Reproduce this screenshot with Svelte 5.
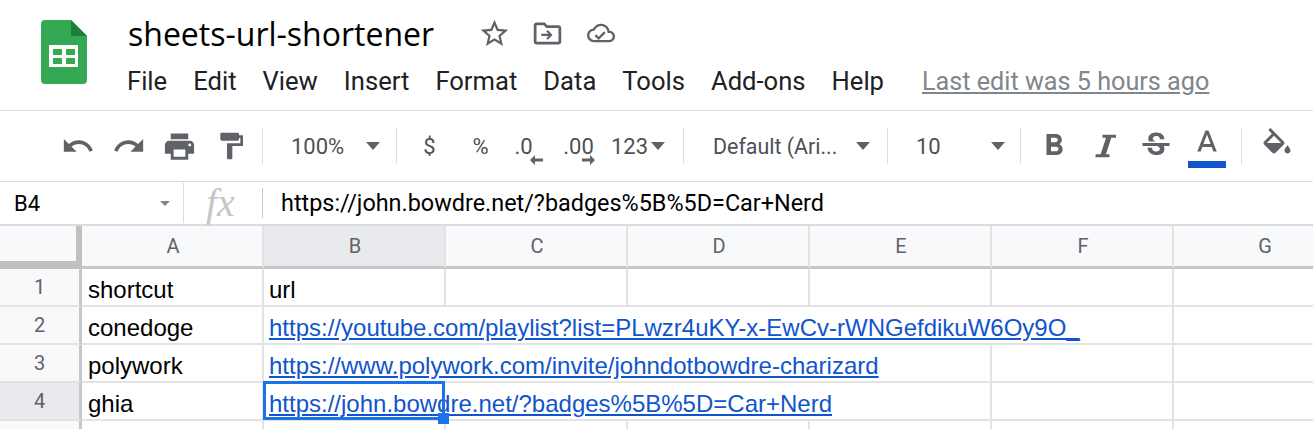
<script>
  const menus = ["File", "Edit", "View", "Insert", "Format", "Data", "Tools", "Add-ons", "Help"];
  const columns = ["A", "B", "C", "D", "E", "F", "G"];
  const rows = [
    { n: 1, a: "shortcut", b: "url", span: 1, link: false },
    { n: 2, a: "conedoge", b: "https://youtube.com/playlist?list=PLwzr4uKY-x-EwCv-rWNGefdikuW6Oy9O_", span: 5, link: true },
    { n: 3, a: "polywork", b: "https://www.polywork.com/invite/johndotbowdre-charizard", span: 4, link: true },
    { n: 4, a: "ghia", b: "https://john.bowdre.net/?badges%5B%5D=Car+Nerd", span: 4, link: true, selected: true },
    { n: "", a: "", b: "", span: 1, link: false }
  ];
</script>

<div class="page">
  <header class="titlebar">
    <svg class="logo" viewBox="0 0 48 66">
      <path fill="#34a853" d="M5 1h26l16 16v44a4 4 0 0 1-4 4H5a4 4 0 0 1-4-4V5a4 4 0 0 1 4-4z" />
      <path fill="#188038" d="M31 1l16 16H31z" />
      <path fill="#fff" d="M9 26h29v22H9z" />
      <path fill="#34a853" d="M13 30h9v6h-9zM26 30h9v6h-9zM13 39h9v6h-9zM26 39h9v6h-9z" />
    </svg>
    <div class="titlecol">
      <div class="titlerow">
        <span class="docname">sheets-url-shortener</span>
        <svg class="ticon" viewBox="0 0 24 24"><path d="M22 9.24l-7.19-.62L12 2 9.19 8.63 2 9.24l5.46 4.73L5.82 21 12 17.27 18.18 21l-1.63-7.03L22 9.24zM12 15.4l-3.76 2.27 1-4.28-3.32-2.88 4.38-.38L12 6.1l1.71 4.04 4.38.38-3.32 2.88 1 4.28L12 15.4z" /></svg>
        <svg class="ticon" viewBox="0 0 24 24"><path d="M20 6h-8l-2-2H4c-1.1 0-2 .9-2 2v12c0 1.1.9 2 2 2h16c1.1 0 2-.9 2-2V8c0-1.1-.9-2-2-2zm0 12H4V6h5.17l2 2H20v10z" /><path d="M12.2 9.5l-1.1 1.1 1.6 1.6H7.5v1.6h5.2l-1.6 1.6 1.1 1.1 3.5-3.5z" /></svg>
        <svg class="ticon cloud" viewBox="0 0 24 24"><path d="M19.35 10.04C18.67 6.59 15.64 4 12 4 9.11 4 6.6 5.64 5.35 8.04 2.34 8.36 0 10.91 0 14c0 3.31 2.69 6 6 6h13c2.76 0 5-2.24 5-5 0-2.64-2.05-4.78-4.65-4.96zM19 18H6c-2.21 0-4-1.79-4-4 0-2.05 1.53-3.76 3.56-3.97l1.07-.11.5-.95C8.08 7.14 9.94 6 12 6c2.62 0 4.88 1.86 5.39 4.43l.3 1.5 1.53.11c1.56.1 2.78 1.41 2.78 2.96 0 1.65-1.35 3-3 3zm-9-2.82l-2.09-2.09L6.5 14.5 10 18l6.01-6.01-1.41-1.41z" /></svg>
      </div>
      <nav class="menubar">
        {#each menus as m}
          <span>{m}</span>
        {/each}
        <span class="lastedit">Last edit was 5 hours ago</span>
      </nav>
    </div>
  </header>

  <div class="toolbar">
    <div class="group lead">
      <span class="btn hist"><svg viewBox="0 0 24 24"><path d="M12.5 8c-2.65 0-5.05.99-6.9 2.6L2 7v9h9l-3.62-3.62c1.39-1.16 3.16-1.88 5.12-1.88 3.54 0 6.55 2.31 7.6 5.5l2.37-.78C21.08 11.03 17.15 8 12.5 8z" /></svg></span>
      <span class="btn hist"><svg viewBox="0 0 24 24"><path d="M18.4 10.6C16.55 8.99 14.15 8 11.5 8c-4.65 0-8.58 3.03-9.96 7.22L3.9 16c1.05-3.19 4.05-5.5 7.6-5.5 1.95 0 3.73.72 5.12 1.88L13 16h9V7l-3.6 3.6z" /></svg></span>
      <span class="btn print"><svg viewBox="0 0 24 24"><path d="M19 8H5c-1.66 0-3 1.34-3 3v6h4v4h12v-4h4v-6c0-1.66-1.34-3-3-3zm-3 11H8v-5h8v5zm3-7c-.55 0-1-.45-1-1s.45-1 1-1 1 .45 1 1-.45 1-1 1zm-1-9H6v4h12V3z" /></svg></span>
      <span class="btn paint"><svg viewBox="0 0 24 24"><path d="M18 4V3c0-.55-.45-1-1-1H5c-.55 0-1 .45-1 1v4c0 .55.45 1 1 1h12c.55 0 1-.45 1-1V6h1v4H9v11c0 .55.45 1 1 1h2c.55 0 1-.45 1-1v-9h8V4h-3z" /></svg></span>
    </div>
    <i class="sep"></i>
    <div class="select zoom"><span>100%</span><b class="caret"></b></div>
    <i class="sep"></i>
    <div class="group formats">
      <span class="btn txt">$</span>
      <span class="btn txt">%</span>
      <span class="btn txt dec less">.0<svg class="arrow" viewBox="0 0 14 10"><path d="M6 0L1 5l5 5V6.5h8v-3H6z" /></svg></span>
      <span class="btn txt dec wide">.00<svg class="arrow" viewBox="0 0 14 10"><path d="M8 0l5 5-5 5V6.5H0v-3h8z" /></svg></span>
      <span class="btn txt more">123<b class="caret"></b></span>
    </div>
    <i class="sep"></i>
    <div class="select font"><span>Default (Ari...</span><b class="caret"></b></div>
    <i class="sep"></i>
    <div class="select size"><span>10</span><b class="caret"></b></div>
    <i class="sep"></i>
    <div class="group styles">
      <span class="btn"><svg viewBox="0 0 24 24"><path d="M15.6 10.79c.97-.67 1.65-1.77 1.65-2.79 0-2.26-1.75-4-4-4H7v14h7.04c2.09 0 3.71-1.7 3.71-3.79 0-1.52-.86-2.82-2.15-3.42zM10 6.5h3c.83 0 1.5.67 1.5 1.5s-.67 1.5-1.5 1.5h-3v-3zm3.5 9H10v-3h3.5c.83 0 1.5.67 1.5 1.5s-.67 1.5-1.5 1.5z" /></svg></span>
      <span class="btn"><svg viewBox="0 0 24 24"><path d="M10.3 4.5h9v2h-3.1l-3.6 11H15v2H5.7v-2h3.4l3.6-11h-2.4z" /></svg></span>
      <span class="btn"><svg viewBox="0 0 24 24"><path d="M6.85 7.08C6.85 4.37 9.45 3 12.24 3c1.64 0 3 .49 3.9 1.28.77.65 1.46 1.73 1.46 3.24h-3.01c0-.31-.05-.59-.15-.85-.29-.86-1.2-1.28-2.25-1.28-1.86 0-2.34 1.02-2.34 1.7 0 .48.25.88.74 1.21.38.25.77.48 1.41.7H7.39c-.21-.34-.54-.89-.54-1.92zM21 12v-2H3v2h9.62c1.15.45 1.96.75 1.96 1.97 0 1-.81 1.67-2.28 1.67-1.54 0-2.93-.54-2.93-2.51H6.4c0 .55.08 1.13.24 1.58.81 2.29 3.29 3.3 5.67 3.3 2.27 0 5.3-.89 5.3-4.05 0-.3-.01-1.16-.48-1.96H21z" /></svg></span>
      <span class="btn color"><svg viewBox="0 0 24 24"><path d="M11 1L5.5 15h2.25l1.12-3h6.25l1.12 3h2.25L13 1h-2zm-1.38 9L12 3.67 14.38 10H9.62z" /></svg><u class="colorbar"></u></span>
    </div>
    <i class="sep"></i>
    <span class="btn fill"><svg viewBox="0 0 24 24"><path d="M16.56 8.94L7.62 0 6.21 1.41l2.38 2.38-5.15 5.15c-.59.59-.59 1.54 0 2.12l5.5 5.5c.29.29.68.44 1.06.44s.77-.15 1.06-.44l5.5-5.5c.59-.58.59-1.53 0-2.12zM5.21 10L10 5.21 14.79 10H5.21zM19 11.5s-2 2.17-2 3.5c0 1.1.9 2 2 2s2-.9 2-2c0-1.33-2-3.5-2-3.5z" /></svg></span>
  </div>

  <div class="formulabar">
    <div class="namebox"><span>B4</span><b class="caret small"></b></div>
    <div class="fx">fx</div>
    <div class="formula">https://john.bowdre.net/?badges%5B%5D=Car+Nerd</div>
  </div>

  <div class="grid">
    <div class="corner"></div>
    {#each columns as c}
      <div class="colhead" class:active={c === "B"}>{c}</div>
    {/each}

    {#each rows as r}
      <div class="rowhead" class:active={r.selected}>{r.n}</div>
      <div class="cell">{r.a}</div>
      <div class="cell b" class:s4={r.span === 4} class:s5={r.span === 5}>
        {#if r.link}<span class="url">{r.b}</span>{:else}{r.b}{/if}
        {#if r.selected}
          <div class="selection"><div class="handle"></div></div>
        {/if}
      </div>
      {#if r.span === 1}
        <div class="cell"></div><div class="cell"></div><div class="cell"></div><div class="cell"></div>
      {:else if r.span === 4}
        <div class="cell"></div>
      {/if}
      <div class="cell"></div>
    {/each}
  </div>
</div>

<style>
  :global(body) {
    margin: 0;
    background: #fff;
  }

  .page {
    width: 1313px;
    height: 429px;
    overflow: hidden;
    font-family: Roboto, "Liberation Sans", sans-serif;
    color: #202124;
  }

  .titlebar {
    display: flex;
    height: 110px;
    border-bottom: 1px solid #dadce0;
    padding-left: 40px;
  }

  .logo {
    width: 48px;
    height: 66px;
    margin-top: 19px;
    margin-right: 40px;
    flex: none;
  }

  .titlecol {
    padding-top: 12px;
  }

  .titlerow {
    display: flex;
    align-items: center;
    height: 42px;
  }

  .docname {
    font-family: "Open Sans", sans-serif;
    font-size: 32px;
    color: #000;
    width: 306px;
    white-space: nowrap;
    margin-right: 44px;
  }

  .ticon {
    width: 33px;
    height: 33px;
    fill: #5f6368;
    margin-right: 20px;
    flex: none;
  }

  .ticon.cloud {
    width: 28px;
    height: 28px;
    margin-left: 3px;
  }

  .menubar {
    display: flex;
    align-items: center;
    gap: 26px;
    height: 36px;
    margin-top: 9px;
    margin-left: -1px;
    font-size: 25.6px;
    white-space: nowrap;
  }

  .lastedit {
    color: #80868b;
    font-size: 25.2px;
    text-decoration: underline;
    margin-left: 12px;
  }

  .toolbar {
    display: flex;
    align-items: center;
    height: 70px;
    border-bottom: 1px solid #dadce0;
    font-size: 22px;
    color: #4d5156;
    white-space: nowrap;
  }

  .group {
    display: flex;
    align-items: center;
  }

  .lead {
    padding-left: 52px;
    width: 210px;
  }

  .btn {
    width: 51px;
    height: 44px;
    display: flex;
    align-items: center;
    justify-content: center;
    flex: none;
    position: relative;
  }

  .btn svg {
    width: 36px;
    height: 36px;
    fill: #5f6368;
  }

  .hist svg {
    width: 34px;
    height: 34px;
  }

  .print svg {
    width: 35px;
    height: 35px;
  }

  .paint svg {
    width: 32px;
    height: 32px;
  }

  .sep {
    width: 1px;
    height: 36px;
    background: #dadce0;
    flex: none;
  }

  .select {
    display: flex;
    align-items: center;
    justify-content: space-between;
    flex: none;
  }

  .zoom {
    width: 133px;
    padding: 0 16px 0 28px;
    box-sizing: border-box;
  }

  .font {
    width: 203px;
    padding: 0 17px 0 29px;
    box-sizing: border-box;
    font-size: 21.4px;
  }

  .size {
    width: 132px;
    padding: 0 15px 0 28px;
    box-sizing: border-box;
  }

  .caret {
    width: 0;
    height: 0;
    border-left: 7px solid transparent;
    border-right: 7px solid transparent;
    border-top: 8px solid #5f6368;
    flex: none;
  }

  .caret.small {
    border-left-width: 5px;
    border-right-width: 5px;
    border-top-width: 5px;
    border-top-color: #80868b;
  }

  .formats {
    width: 286px;
    padding-left: 7px;
    box-sizing: border-box;
  }

  .txt {
    font-size: 22px;
  }

  .dec {
    box-sizing: border-box;
  }

  .dec.less {
    width: 44px;
    padding-right: 9px;
  }

  .dec.wide {
    width: 60px;
    margin-left: 4px;
    padding-right: 11px;
  }

  .dec .arrow {
    position: absolute;
    width: 14px;
    height: 10px;
    bottom: 3px;
    right: 7px;
  }

  .dec.wide .arrow {
    right: 18px;
  }

  .more {
    width: 60px;
    margin-left: -3px;
    gap: 3px;
    justify-content: flex-start;
  }

  .styles {
    padding-left: 7px;
    width: 220px;
    box-sizing: border-box;
  }

  .color svg {
    margin-top: 1px;
  }

  .colorbar {
    position: absolute;
    left: 7px;
    right: 6px;
    bottom: 0;
    height: 7px;
    background: #1155cc;
  }

  .fill {
    margin-left: 9px;
  }

  .formulabar {
    display: flex;
    align-items: center;
    height: 44px;
    border-bottom: 2px solid #dadce0;
    box-sizing: border-box;
    font-size: 22px;
  }

  .namebox {
    width: 184px;
    height: 40px;
    display: flex;
    align-items: center;
    justify-content: space-between;
    padding: 0 13px 0 14px;
    box-sizing: border-box;
    border-right: 1px solid #dadce0;
    color: #000;
    flex: none;
  }

  .fx {
    width: 79px;
    height: 30px;
    line-height: 30px;
    padding-left: 22px;
    box-sizing: border-box;
    border-right: 1px solid #c8c9cc;
    font-family: "Liberation Serif", serif;
    font-style: italic;
    font-size: 40px;
    color: #c4c7c5;
    flex: none;
  }

  .formula {
    padding-left: 18px;
    color: #000;
    white-space: nowrap;
    font-size: 23.4px;
  }

  .grid {
    display: grid;
    grid-template-columns: 82px repeat(7, 182px);
    grid-template-rows: 43px repeat(5, 38px);
    font-family: "Liberation Sans", Arial, sans-serif;
  }

  .corner {
    background: #f8f9fa;
    border-right: 6px solid #c0c0c0;
    border-bottom: 8px solid #c0c0c0;
    box-sizing: border-box;
  }

  .colhead {
    background: #f8f9fa;
    border-right: 2px solid #e2e3e3;
    border-bottom: 3px solid #c7c7c7;
    box-sizing: border-box;
    display: flex;
    align-items: center;
    justify-content: center;
    padding-left: 2px;
    font-family: Roboto, sans-serif;
    font-size: 20px;
    color: #5f6368;
  }

  .rowhead {
    background: #f8f9fa;
    border-right: 3px solid #c7c7c7;
    border-bottom: 2px solid #e2e3e3;
    box-sizing: border-box;
    display: flex;
    align-items: center;
    justify-content: center;
    font-family: Roboto, sans-serif;
    font-size: 20px;
    color: #5f6368;
  }

  .active {
    background: #e8eaed;
  }

  .cell {
    position: relative;
    border-right: 2px solid #e2e3e3;
    border-bottom: 2px solid #e2e3e3;
    box-sizing: border-box;
    padding-left: 6px;
    font-size: 24px;
    line-height: 41px;
    color: #000;
    white-space: nowrap;
  }

  .cell.b {
    padding-left: 5px;
  }

  .s4 {
    grid-column: span 4;
  }

  .s5 {
    grid-column: span 5;
  }

  .url {
    color: #1155cc;
    text-decoration: underline;
  }

  .selection {
    position: absolute;
    z-index: 1;
    left: -1px;
    top: -2px;
    width: 182px;
    height: 39px;
    border: 3px solid #1a73e8;
    box-sizing: border-box;
  }

  .handle {
    position: absolute;
    right: -7px;
    bottom: -7px;
    width: 11px;
    height: 11px;
    background: #1a73e8;
  }
</style>
